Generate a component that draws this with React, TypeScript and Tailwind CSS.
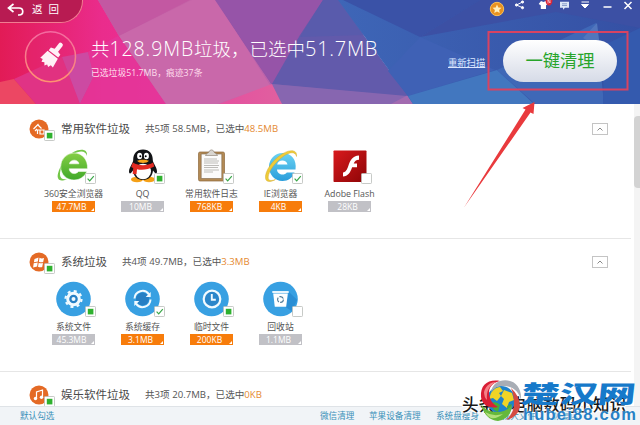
import type { ReactNode } from "react";

type Check = "tick" | "partial" | "none";

type Item = {
  name: string;
  size: string;
  active: boolean;
  check: Check;
  icon: ReactNode;
};

const CheckBox = ({ state }: { state: Check }) => (
  <svg viewBox="0 0 11 11" className="block h-[11px] w-[11px]">
    <rect x="0.5" y="0.5" width="10" height="10" rx="0.8" fill="#fff" stroke="#b9bdb9" strokeWidth="0.8" />
    {state === "tick" && <path d="M2.6 5.6 4.7 7.8 8.8 3.2" fill="none" stroke="#3aa648" strokeWidth="1.2" />}
    {state === "partial" && <rect x="2.8" y="2.8" width="5.6" height="5.6" fill="#2fb12f" />}
  </svg>
);

const Browser360Icon = () => (
  <svg viewBox="0 0 36 36" className="h-9 w-9">
    <defs>
      <linearGradient id="g360" x1="0" y1="0" x2="0" y2="1">
        <stop offset="0" stopColor="#85cf45" />
        <stop offset="1" stopColor="#40a829" />
      </linearGradient>
    </defs>
    <path d="M31 8C30 2.500 24 2 17 6 10 10 3.500 20 4 27c.3 3.500 3 5 7 4-7 3.500-10.500.5-9-5.500C4 18 10 8 17.500 4 25 0 32 1 31 8Z" fill="#73c747" />
    <path d="M18 5a13.500 13.500 0 0 0-13.300 13.700C4.700 26.500 10.500 32 18 32c5.500 0 10.500-3 12.800-8.500h-8.300c-3.200 3.700-9 2.200-9.300-2.700h18.300C32 12 26.500 5 18 5Zm-4.600 10.800c.6-4.700 9-5 9.500 0Z" fill="url(#g360)" stroke="#fff" strokeWidth="0.500" />
  </svg>
);

const PenguinIcon = () => (
  <svg viewBox="0 0 36 36" className="h-9 w-9">
    <ellipse cx="12" cy="31.500" rx="6" ry="2.700" fill="#f5a016" />
    <ellipse cx="24" cy="31.500" rx="6" ry="2.700" fill="#f5a016" />
    <path d="M18 1.500C11.500 1.500 8.200 6 8.200 12c0 3-4 7-4.200 11.500 0 2 1 2.500 2 1.500l2-2.500C8.500 28 12 32 18 32s9.500-4 10-9.500l2 2.500c1 1 2 .5 2-1.500C32 19 27.800 15 27.800 12c0-6-3.300-10.500-9.800-10.500Z" fill="#121316" />
    <ellipse cx="18" cy="23.500" rx="8" ry="7.800" fill="#fff" />
    <ellipse cx="14.600" cy="8" rx="2.500" ry="3.300" fill="#fff" />
    <ellipse cx="21.400" cy="8" rx="2.500" ry="3.300" fill="#fff" />
    <circle cx="15.300" cy="8.300" r="1" />
    <circle cx="20.700" cy="8.300" r="1" />
    <path d="M12 12.800c3-1.500 9-1.500 12 0-2.500 3-9.500 3-12 0Z" fill="#f7a51c" />
    <path d="M7.800 14.500c6 3.600 14.400 3.600 20.400 0l1 4c-6.500 3.500-13 3.900-17.200 2.700l-.5 5-3.800-.3.500-6-2-1Z" fill="#e22a22" />
  </svg>
);

const ClipboardIcon = () => (
  <svg viewBox="0 0 36 36" className="h-9 w-9">
    <rect x="4.500" y="4" width="26" height="29" rx="1.500" fill="#b38a54" stroke="#8c683c" strokeWidth="0.700" />
    <path d="M7.200 6h20.600v24.500H7.200Z" fill="#fbfbfa" stroke="#7e6547" strokeWidth="0.600" />
    <path d="M11.500 7.500c0-2 3.500-2.200 4-4.500.5-1.500 3.500-1.500 4 0 .5 2.300 4 2.500 4 4.500Z" fill="#d8d5cf" stroke="#86796a" strokeWidth="0.600" />
    <g stroke="#b5b4b0" strokeWidth="0.900">
      <path d="M10 11h13M10 13h15M10 15h14M10 17.500h15M10 19.500h14M10 22h15M10 24h9" />
    </g>
  </svg>
);

const IEIcon = () => (
  <svg viewBox="0 0 36 36" className="h-9 w-9">
    <defs>
      <linearGradient id="ie" x1="0" y1="0" x2="0" y2="1">
        <stop offset="0" stopColor="#6bd3f3" />
        <stop offset="1" stopColor="#2a9ddb" />
      </linearGradient>
    </defs>
    <path d="M19.500 5A13.500 13.500 0 0 0 6 18.500C6 26.500 11.500 33 19.500 33c5.700 0 10.200-3 12-8.500h-7.700c-2.600 3.500-9.400 2.400-9.800-3h18.500C34 12 28.500 5 19.500 5Zm-5.300 11.500c.8-5.500 9.500-5.500 10.300 0Z" fill="url(#ie)" />
    <path d="M33.500 8.500C34.500 2 28 .5 19 6 9.500 12 1.500 23.500 2.500 30.300c.5 4 5 4.200 10 1.200-5.500 2-7.500.8-7.300-2.500.3-5.500 7-15 15-20.500C27 3.500 32.500 3.500 33.500 8.500Z" fill="#eecb38" stroke="#cfa526" strokeWidth="0.400" />
  </svg>
);

const FlashIcon = () => (
  <svg viewBox="0 0 36 36" className="h-9 w-9">
    <defs>
      <linearGradient id="flash" x1="0" y1="0" x2="1" y2="1">
        <stop offset="0" stopColor="#d8191c" />
        <stop offset="1" stopColor="#8d0507" />
      </linearGradient>
    </defs>
    <rect x="1.500" y="2.500" width="33" height="31.500" rx="0.800" fill="url(#flash)" />
    <path d="M27 7.500v4.200c-3 .1-4.300 1.300-5.300 3.800H25v3.800h-4.900c-1.700 5.200-4.100 9-9.100 9.200v-4c2.900-.3 4.200-3.200 5.300-6.500 1.800-5.500 4.300-10.300 10.700-10.500Z" fill="#fff" />
  </svg>
);

const Disc = ({ children }: { children: ReactNode }) => (
  <svg viewBox="0 0 36 36" className="h-9 w-9">
    <circle cx="17.500" cy="18" r="17.300" fill="#38a0e2" />
    {children}
  </svg>
);

const GearIcon = () => (
  <Disc>
    <circle cx="17.500" cy="18" r="4.800" fill="#267fc4" />
    <g stroke="#f1faff" fill="none">
      <circle cx="17.500" cy="18" r="5.800" strokeWidth="3" />
      <circle cx="17.500" cy="18" r="8" strokeWidth="2.200" strokeDasharray="3 3.283" />
    </g>
    <circle cx="17.500" cy="18" r="2" fill="#f1faff" />
  </Disc>
);

const RefreshIcon = () => (
  <Disc>
    <circle cx="17.500" cy="18" r="6.500" fill="#267fc4" />
    <g fill="none" stroke="#f1faff" strokeWidth="2">
      <path d="M9.500 17.500a8 8 0 0 1 14.500-4.200M25.500 18.500A8 8 0 0 1 11 22.700" />
    </g>
    <path d="M25.700 11v5h-5ZM9.300 25v-5h5Z" fill="#f1faff" />
  </Disc>
);

const ClockIcon = () => (
  <Disc>
    <circle cx="18" cy="18" r="8.300" fill="#2b86ca" stroke="#f1faff" strokeWidth="2.200" />
    <path d="M17.800 13v5.700h4" fill="none" stroke="#f1faff" strokeWidth="1.900" />
  </Disc>
);

const RecycleIcon = () => (
  <Disc>
    <path d="m26 11 8.300 8-5.800 11-6-4Z" fill="#2b8ed4" />
    <path d="M9.300 10h16.400v2H9.300Z" fill="#e9f5fc" />
    <path d="M10.200 12.500h14.600l-1.600 13.200H11.800Z" fill="#fff" />
    <circle cx="17.500" cy="18.500" r="2.900" fill="none" stroke="#4b7795" strokeWidth="1.100" strokeDasharray="4.800 1.270" />
  </Disc>
);

const softwareItems: Item[] = [
  { name: "360安全浏览器", size: "47.7MB", active: true, check: "tick", icon: <Browser360Icon /> },
  { name: "QQ", size: "10MB", active: false, check: "partial", icon: <PenguinIcon /> },
  { name: "常用软件日志", size: "768KB", active: true, check: "tick", icon: <ClipboardIcon /> },
  { name: "IE浏览器", size: "4KB", active: true, check: "tick", icon: <IEIcon /> },
  { name: "Adobe Flash", size: "28KB", active: false, check: "none", icon: <FlashIcon /> },
];

const systemItems: Item[] = [
  { name: "系统文件", size: "45.3MB", active: false, check: "partial", icon: <GearIcon /> },
  { name: "系统缓存", size: "3.1MB", active: true, check: "tick", icon: <RefreshIcon /> },
  { name: "临时文件", size: "200KB", active: true, check: "partial", icon: <ClockIcon /> },
  { name: "回收站", size: "1.1MB", active: false, check: "none", icon: <RecycleIcon /> },
];

const ItemCell = ({ item }: { item: Item }) => (
  <div className="flex w-[69px] flex-col items-center">
    <div className="relative h-9">
      {item.icon}
      <div className="absolute top-[25px] left-[29px]">
        <CheckBox state={item.check} />
      </div>
    </div>
    <div className="mt-1 h-3 text-[8.8px] leading-3 whitespace-nowrap text-[#555]">{item.name}</div>
    <div
      className={`relative mt-px h-[11px] w-[43px] pr-1 text-center text-[8.5px] leading-[11px] text-white ${
        item.active ? "bg-[#f77c0b]" : "bg-[#c1c1c6]"
      }`}
    >
      {item.size}
      <svg viewBox="0 0 4 4" className="absolute right-px bottom-px h-[3px] w-[3px]">
        <path d="M4 0v4H0Z" fill="#fff" />
      </svg>
    </div>
  </div>
);

type SectionProps = {
  title: string;
  info: string;
  selected: string;
  icon: ReactNode;
  items: Item[];
  collapsible?: boolean;
};

const Section = ({ title, info, selected, icon, items, collapsible = true }: SectionProps) => (
  <section className="h-[133px] w-[631px] shrink-0 border-b border-[#e6e6e6]">
    <div className="flex h-[41px] items-center pt-[5px] pl-[29px]">
      <div className="relative h-5 w-5">
        <svg viewBox="0 0 20 20" className="h-5 w-5">
          <circle cx="10" cy="10" r="9.500" fill="#e46a25" />
          {icon}
        </svg>
        <div className="absolute top-[11px] left-[15px]">
          <CheckBox state="partial" />
        </div>
      </div>
      <h2 className="ml-3 text-[11.5px] text-[#4a4a4a]">{title}</h2>
      <p className="ml-[15px] text-[9.6px] whitespace-nowrap text-[#555]">
        {info}
        <span className="text-[#e58a32]">{selected}</span>
      </p>
      {collapsible && (
        <button className="mr-[23px] ml-auto flex h-3 w-4 items-center justify-center border border-[#c4c4c4]">
          <svg viewBox="0 0 6 4" className="h-1 w-1.5">
            <path d="M.5 3.500 3 1l2.500 2.500" fill="none" stroke="#888" />
          </svg>
        </button>
      )}
    </div>
    <div className="flex pt-px pl-[39px]">
      {items.map((item) => (
        <ItemCell key={item.name} item={item} />
      ))}
    </div>
  </section>
);

const HeaderBackdrop = () => (
  <svg viewBox="0 0 640 104" className="absolute inset-0 h-[104px] w-[640px]" preserveAspectRatio="none">
    <defs>
      <linearGradient id="left" x1="0" x2="1">
        <stop offset="0" stopColor="#e21b56" />
        <stop offset="0.6" stopColor="#ea2c8c" />
        <stop offset="1" stopColor="#ec3098" />
      </linearGradient>
      <linearGradient id="right" x1="0" x2="1">
        <stop offset="0" stopColor="#3e66b7" />
        <stop offset="1" stopColor="#3550a4" />
      </linearGradient>
      <linearGradient id="pink" x1="0" x2="1">
        <stop offset="0" stopColor="#e5509f" />
        <stop offset="1" stopColor="#e0609f" />
      </linearGradient>
    </defs>
    <path d="M0 0h340v104H0Z" fill="#9654a8" />
    <path d="M270 80h150v24H270Z" fill="#7561ae" />
    <path d="M0 0h170v104H0Z" fill="url(#left)" />
    <path d="M0 82 14 79 36 104H0Z" fill="#ec4763" />
    <path d="m14 79 48-22 18 47H36Z" fill="#e03385" />
    <path d="m62 57 26-5 6 24-14 28Z" fill="#cc4aa2" />
    <path d="m88 52 6 24-14 28h86l-48-68Z" fill="#e2379b" opacity=".7" />
    <path d="M98 0h118l66 104H166l-47-68Z" fill="#c565a8" />
    <path d="M98 0h92l-71 36Z" fill="#c358a2" />
    <path d="m119 36 73-36h23l57 85-55 19h-51Z" fill="#cb69ab" opacity=".7" />
    <path d="M215 0h108l-23 35-28 50Z" fill="#9654a8" />
    <path d="M323 0h15l71 97-137-13 28-49Z" fill="#625aab" />
    <path d="M323 0h17l24 35-64 2Z" fill="#595bac" />
    <path d="m272 84 135 12 3 8H282Z" fill="#8766b0" />
    <path d="m272 84-53 20h63Z" fill="url(#pink)" />
    <path d="m408 95-17 9h24Z" fill="#a26bb0" />
    <path d="M338 0h302v104H413l-6-9Z" fill="url(#right)" />
    <path d="m343 0 77 37 60-37Z" fill="#3a52a7" />
    <path d="m420 37 60-37h160v28l-84-16Z" fill="#3c50a4" />
    <path d="m388 71 32-34 75 33-87 26Z" fill="#3f61b5" />
    <path d="m408 96 89-26 37 34H413Z" fill="#4277bf" />
    <path d="m497 70 99-47 8 81h-69Z" fill="#3f68b7" />
    <path d="m583 38 14-15 3 25Z" fill="#5276bd" />
    <path d="m604 45 36-17v76h-37Z" fill="#345aae" />
  </svg>
);

const WindowControls = () => (
  <svg viewBox="0 0 152 22" className="h-[22px] w-[152px]">
    <circle cx="9" cy="9" r="6.700" fill="#e9921f" stroke="#f8c15d" strokeWidth="1" />
    <path d="m9 4.500 1.300 3 3.200.3-2.400 2.100.7 3.100L9 11.400 6.200 13l.7-3.100-2.400-2.100 3.200-.3Z" fill="#fff0bd" />
    <g fill="#fff" stroke="#fff">
      <path d="m34.500 2-6 3 6 2.700" fill="none" strokeWidth="1" />
      <circle cx="34.500" cy="2" r="1.100" />
      <circle cx="28.500" cy="5" r="1.100" />
      <circle cx="34.500" cy="7.700" r="1.100" />
    </g>
    <path d="m53 1-2.300 3 2.100 1.200V9h5.200V5.200L60 4l-2-3-2.500 1Z" fill="#fff" />
    <path d="M57.500 0h7c0 3.500-1.500 5.500-3.500 5.500S57.500 3.500 57.500 0Z" fill="#dc2637" />
    <path d="M60 3.500V0l2 3V0" stroke="#fff" strokeWidth=".6" fill="none" />
    <path d="M72 1.800h9v6h-4l-2 2v-2h-3Z" fill="#dce6f6" />
    <path d="M74 3.800h5M74 5.500h5" stroke="#657fb8" strokeWidth=".7" />
    <path d="M93.500 2h7.500M93.500 4.500h7L97 8Z" fill="#fff" stroke="#fff" strokeWidth="1" />
    <path d="M115.500 7h8M136.500 2l7 7m0-7-7 7" stroke="#fff" strokeWidth="1.500" />
  </svg>
);

const Header = () => (
  <header className="relative h-[104px] shrink-0 overflow-hidden text-white">
    <HeaderBackdrop />
    <div className="relative flex h-full">
      <div className="w-[91px]">
        <button className="flex h-[23px] w-[83px] items-center rounded-br-[22px] border-r border-b border-[#f17d91] bg-[#b81b52] pb-[3px] pl-[7px] text-[10.5px]">
          <svg viewBox="0 0 18 14" className="h-3.5 w-[18px]">
            <path d="M6.500 1 1.500 5l5 4M2 5h10c5 0 5 7 0 7h-1" fill="none" stroke="#fff" strokeWidth="1.700" />
          </svg>
          <span className="ml-[7px] tracking-[6px]">返回</span>
        </button>
        <svg viewBox="0 0 54 54" className="mt-[7px] ml-[24px] h-[54px] w-[54px]">
          <defs>
            <linearGradient id="ring" x1="0" y1="0" x2="0" y2="1">
              <stop offset="0" stopColor="#f36ba1" />
              <stop offset="1" stopColor="#ff9271" />
            </linearGradient>
          </defs>
          <circle cx="26.500" cy="26.700" r="25" fill="#e32c75" fillOpacity=".25" stroke="url(#ring)" strokeWidth="1.500" />
          <g transform="rotate(38 27 27)" fill="#fff0f6">
            <rect x="24.800" y="9.500" width="4.600" height="11" rx="2" />
            <path d="M21 19.500q6-2.500 12 0v3.500H21Z" />
            <path d="m20.500 24.200 13 0 1.500 10-3-.5-1 3-2.500-1.500-1.500 2.500-2-2.500-2.500 1.500-.8-3-2.700.5Z" />
          </g>
        </svg>
      </div>
      <div className="w-[357px] pt-[34px]">
        <h1 className="flex h-[29px] items-center text-[18.5px] leading-[29px] font-light whitespace-nowrap">
          共<span className="text-[19.500px] tracking-[0.900px]">128.9MB</span>垃圾，已选中
          <span className="text-[20px] tracking-[0.700px]">51.7MB</span>
        </h1>
        <p className="h-[18px] pt-px text-[8.800px] leading-[18px] text-[#ffddec]">已选垃圾51.7MB，痕迹37条</p>
      </div>
      <div className="flex w-[192px] flex-col">
        <div className="ml-[40px] h-[22px]">
          <WindowControls />
        </div>
        <div className="mt-[18px] flex items-center">
          <a className="w-[55px] pt-1 text-[9.300px] whitespace-nowrap text-[#dce7ff] underline">重新扫描</a>
          <button className="h-[42px] w-[114px] rounded-full bg-gradient-to-b from-white to-[#d6dbe7] pb-px text-[17.300px] text-[#27a52a]">
            一键清理
          </button>
        </div>
      </div>
    </div>
  </header>
);

const Footer = () => (
  <footer className="flex h-[19px] shrink-0 items-center border-t border-[#dfe3e7] bg-[#f1f4f7] pl-5 text-[8.600px] whitespace-nowrap text-[#3990b9]">
    <a className="w-[300px]">默认勾选</a>
    <a className="w-[49px]">微信清理</a>
    <a className="w-[67px]">苹果设备清理</a>
    <a className="w-[57px]">系统盘瘦身</a>
    <a className="w-[60px]">查找大文件</a>
    <a>恢复区</a>
  </footer>
);

// Click hint: frame round the clean button and an arrow that points at it
const Annotation = () => (
  <svg viewBox="0 0 640 425" className="pointer-events-none absolute inset-0 h-[425px] w-[640px]">
    <rect x="488.500" y="32" width="139" height="57.500" fill="none" stroke="#d94361" strokeWidth="2" />
    <path d="m464 207.500 61.500-98-3-1.500 12-6-1 12-3-1.500Z" fill="#e93a3d" />
  </svg>
);

const Watermark = () => (
  <div className="absolute top-[375px] left-[460px] h-[50px] w-[180px] overflow-hidden whitespace-nowrap">
    <div className="absolute top-[20px] left-[2px] text-[16.600px] leading-5 font-medium text-[#171717] [text-shadow:-1px_-1px_0_#fff,1px_-1px_0_#fff,-1px_1px_0_#fff,1px_1px_0_#fff]">
      头条@电脑数码小知识
    </div>
    <svg viewBox="0 0 42 44" className="absolute top-[3px] left-[20px] h-11 w-[42px]">
      <circle cx="21" cy="22" r="14" fill="#1e83cc" />
      <path d="M11 15q4-6 9-6l3 4-4 2 2 3-4 5-4-3-4 1ZM24 12l8 3 2 7-5 2-2 6-5-4 2-5-3-3Z" fill="#f0d426" />
      <path d="M11 25q6-2 9 2l-2 7q-6-2-7-9ZM27 28l5-2-4 7Z" fill="#48ac38" />
      <path d="M1 19C0 7 8 1 20 3 11 5 7 11 10 20q2 6 8 9C9 31 2 27 1 19Z" fill="#d91e35" />
      <path d="M4 14C6 7 11 4 16 4 9 8 6 13 7 22q-3-3-3-8Z" fill="#f58087" />
      <path d="M20 3C33 0 42 8 41 22c-2-9-9-15-20-14-5 .5-7 3-10 6 1-6 4-9 9-11Z" fill="#a8adb5" />
      <path d="M31 10q9 8 9 19-3 11-14 13 8-7 8-16 0-9-3-16Z" fill="#d44b42" />
      <path d="M1 26q5 8 16 8 10 0 15-7-1 14-14 16Q5 42 1 26Z" fill="#65b83b" />
      <path d="M5 34q8 5 18 2-6 5-12 4-4-2-6-6Z" fill="#b1df79" />
    </svg>
    <div className="absolute top-0 left-[63px] text-[37px] leading-[38px] font-black text-[#1679ca] [transform-origin:left_top] [transform:translateY(6px)_scale(1.030,.66)_skewX(-4deg)]">
      楚汉网
    </div>
    <div className="absolute top-[31px] left-[63px] text-[16.5px] leading-[16px] font-bold tracking-[1.200px] text-[#2781c5] [font-family:'Liberation_Sans',sans-serif] [text-shadow:0_0_2px_#fff]">
      hubei88.com
    </div>
  </div>
);

const App = () => (
  <div className="relative flex h-[425px] w-[640px] flex-col overflow-hidden bg-white [font-family:'Open_Sans','Noto_Sans_CJK_SC',sans-serif]">
    <Header />
    <main className="flex min-h-0 flex-1 overflow-hidden">
      <div className="flex w-[634px] flex-col pt-[2px]">
        <Section
          title="常用软件垃圾"
          info="共5项 58.5MB，已选中"
          selected="48.5MB"
          items={softwareItems}
          icon={<path d="m4.500 10 5-5M6 12l2-2M9 6l3.500 3.500M8.500 15v-4h2M11 11h4v4h-4Z" fill="none" stroke="#fff" strokeWidth="1.200" />}
        />
        <Section
          title="系统垃圾"
          info="共4项 49.7MB，已选中"
          selected="3.3MB"
          items={systemItems}
          icon={<path d="m5.500 7 4-1.500-.6 4-4 .8ZM10.500 5.700q2 1.200 4.500.3l-.8 4q-2 .8-4.300-.3ZM4.700 11.300l4-.8-.6 4-4 .9ZM9.700 10.700q2 1 4.300.3l-.8 4q-2 .7-4.200-.3Z" fill="#fff" />}
        />
        <Section
          title="娱乐软件垃圾"
          info="共3项 20.7MB，已选中"
          selected="0KB"
          items={[]}
          collapsible={false}
          icon={
            <g fill="#fff">
              <path d="M7.500 13.500V7l6-2v7" fill="none" stroke="#fff" strokeWidth="1.200" />
              <circle cx="6.500" cy="13.500" r="1.700" />
              <circle cx="12.500" cy="12.300" r="1.700" />
            </g>
          }
        />
      </div>
      <div className="w-1.5 bg-[#f4f4f4] pt-3">
        <div className="h-[72px] rounded-l-sm bg-[#d3d3d3]" />
      </div>
    </main>
    <Footer />
    <Annotation />
    <Watermark />
  </div>
);

export default App;
